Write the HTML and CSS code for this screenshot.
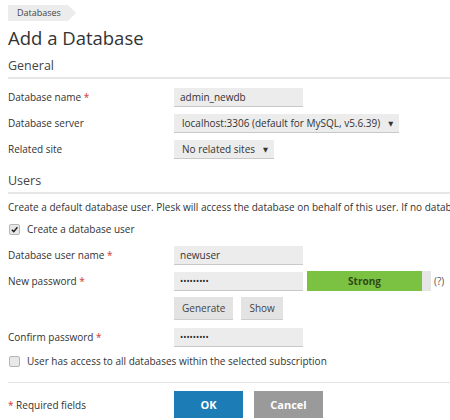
FILE: index.html
```html
<!DOCTYPE html>
<html>
<head>
<meta charset="utf-8">
<link rel="stylesheet" href="styles.css">
</head>
<body>
<div class="page">
  <div class="crumbs"><span class="crumb">Databases</span></div>
  <h1 class="title">Add a Database</h1>

  <h2 class="section">General</h2>
  <div class="row">
    <div class="label">Database name <span class="req">*</span></div>
    <div class="field"><span class="input">admin_newdb</span></div>
  </div>
  <div class="row">
    <div class="label">Database server</div>
    <div class="field"><span class="select">localhost:3306 (default for MySQL, v5.6.39)<span class="caret">▼</span></span></div>
  </div>
  <div class="row">
    <div class="label">Related site</div>
    <div class="field"><span class="select">No related sites<span class="caret">▼</span></span></div>
  </div>

  <h2 class="section users">Users</h2>
  <div class="hintwrap"><p class="hint">Create a default database user. Plesk will access the database on behalf of this user. If no database user is created, you can add one later.</p></div>
  <div class="check"><span class="box on"><svg viewBox="0 0 10 10" width="9" height="9"><path d="M2 5.2 L4.2 7.4 L8.2 2.6" fill="none" stroke="#222" stroke-width="1.7"/></svg></span>Create a database user</div>
  <div class="row">
    <div class="label">Database user name <span class="req">*</span></div>
    <div class="field"><span class="input">newuser</span></div>
  </div>
  <div class="row">
    <div class="label">New password <span class="req">*</span></div>
    <div class="field">
      <span class="input pw">•••••••••</span>
      <span class="meter"><span class="meter-fill">Strong</span></span>
      <span class="help">(?)</span>
    </div>
  </div>
  <div class="btnrow">
    <span class="btn">Generate</span>
    <span class="btn">Show</span>
  </div>
  <div class="row">
    <div class="label">Confirm password <span class="req">*</span></div>
    <div class="field"><span class="input pw">•••••••••</span></div>
  </div>
  <div class="check second"><span class="box"></span>User has access to all databases within the selected subscription</div>

  <div class="footer">
    <div class="label"><span class="req">*</span> Required fields</div>
    <div class="actions">
      <span class="act ok">OK</span>
      <span class="act cancel">Cancel</span>
    </div>
  </div>
</div>
</body>
</html>
```
FILE: styles.css
```css
html, body {
  margin: 0;
  padding: 0;
  background: #fff;
}
body {
  font-family: "Open Sans", "DejaVu Sans", sans-serif;
  font-size: 10px;
  color: #333;
  overflow: hidden;
  width: 450px;
  height: 420px;
}
.page {
  padding: 5px 0 0 8px;
  width: 460px;
}
.crumbs {
  height: 16px;
  display: flex;
}
.crumb {
  position: relative;
  display: inline-block;
  background: #ececec;
  height: 16px;
  line-height: 16px;
  font-size: 9px;
  color: #444;
  padding: 0 7px 0 9px;
  margin-right: 8px;
}
.crumb::after {
  content: "";
  position: absolute;
  right: -8px;
  top: 0;
  border-left: 8px solid #ececec;
  border-top: 8px solid transparent;
  border-bottom: 8px solid transparent;
}
.title {
  font-weight: normal;
  font-size: 18.5px;
  margin: 4px 0 0 0;
  line-height: 26px;
  color: #333;
}
.section {
  font-weight: normal;
  font-size: 12.5px;
  color: #444;
  margin: 6px 0 0 0;
  line-height: 18px;
  padding-bottom: 2px;
  border-bottom: 2px solid #e6e6e6;
}
.section.users {
  margin-top: 10px;
}
.row {
  display: flex;
  align-items: center;
  height: 26px;
}
.section + .row {
  margin-top: 5px;
}
.label {
  width: 166px;
  flex: none;
}
.req {
  color: #d0342c;
}
.field {
  display: flex;
  align-items: center;
}
.input, .select {
  display: inline-block;
  background: #ececec;
  border-bottom: 1px solid #c9c9c9;
  height: 18px;
  line-height: 18px;
  box-sizing: content-box;
  padding: 0 6px;
  color: #333;
}
.input {
  width: 117px;
}
.input.pw {
  font-size: 8.5px;
  letter-spacing: 0;
  color: #222;
}
.select {
  padding: 0 6px 0 8px;
}
.caret {
  font-size: 6.5px;
  margin-left: 8px;
  position: relative;
  top: -1px;
}
.meter {
  display: inline-flex;
  margin-left: 4px;
  width: 124px;
  height: 20px;
  background: #e6e6e6;
}
.meter-fill {
  width: 115px;
  background: #7cc242;
  color: #2e4a14;
  font-weight: bold;
  text-align: center;
  line-height: 20px;
}
.help {
  margin-left: 3px;
  color: #555;
}
.hintwrap {
  width: 442px;
  overflow: hidden;
}
.hint {
  margin: 6px 0 0 0;
  white-space: nowrap;
  line-height: 15px;
}
.check {
  display: flex;
  align-items: center;
  height: 16px;
  margin-top: 6px;
  margin-bottom: 5px;
  padding-left: 1px;
}
.check.second {
  margin-top: 3px;
  margin-bottom: 0;
}
.box {
  width: 9px;
  height: 9px;
  border: 1px solid #b5b5b5;
  background: #e8e8e8;
  border-radius: 2px;
  margin-right: 7px;
  display: inline-flex;
  align-items: center;
  justify-content: center;
}
.btnrow {
  display: flex;
  gap: 8px;
  padding-left: 166px;
  margin-top: 3px;
  margin-bottom: 4px;
}
.btn {
  display: inline-block;
  background: #e3e3e3;
  border-bottom: 1px solid #cdcdcd;
  height: 22px;
  line-height: 22px;
  padding: 0 8px;
  color: #444;
}
.footer {
  display: flex;
  align-items: center;
  margin-top: 13px;
  padding-top: 8px;
  border-top: 1px solid #e3e3e3;
}
.actions {
  display: flex;
  gap: 11px;
}
.act {
  display: inline-block;
  width: 69px;
  height: 27px;
  line-height: 27px;
  text-align: center;
  color: #fff;
  font-weight: bold;
  font-size: 11px;
}
.ok {
  background: #1c7db6;
}
.cancel {
  background: #9a9a9a;
}
```
